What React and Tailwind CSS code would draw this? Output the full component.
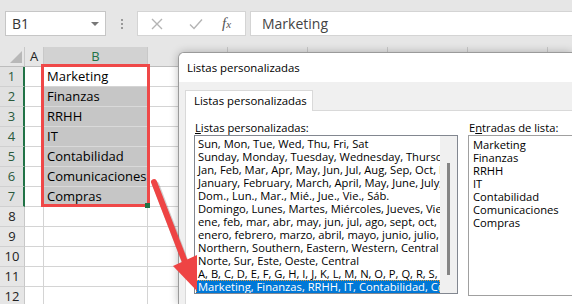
const CELLS = ['Marketing', 'Finanzas', 'RRHH', 'IT', 'Contabilidad', 'Comunicaciones', 'Compras', '', '', '', '', ''];

const LISTS = [
  'Sun, Mon, Tue, Wed, Thu, Fri, Sat',
  'Sunday, Monday, Tuesday, Wednesday, Thursday, Friday, Saturday',
  'Jan, Feb, Mar, Apr, May, Jun, Jul, Aug, Sep, Oct, Nov, Dec',
  'January, February, March, April, May, June, July, August',
  'Dom., Lun., Mar., Mié., Jue., Vie., Sáb.',
  'Domingo, Lunes, Martes, Miércoles, Jueves, Viernes, Sábado',
  'ene, feb, mar, abr, may, jun, jul, ago, sept, oct, nov, dic',
  'enero, febrero, marzo, abril, mayo, junio, julio, agosto',
  'Northern, Southern, Eastern, Western, Central',
  'Norte, Sur, Este, Oeste, Central',
  'A, B, C, D, E, F, G, H, I, J, K, L, M, N, O, P, Q, R, S, T',
];

const ENTRIES = ['Marketing', 'Finanzas', 'RRHH', 'IT', 'Contabilidad', 'Comunicaciones', 'Compras'];

function FormulaBar() {
  return (
    <div className="flex h-[47px] items-start bg-[#e6e6e6] pt-[11px] font-['Open_Sans',sans-serif]">
      <div className="ml-[5px] flex h-[25px] w-[101px] items-center justify-between border border-[#c6c6c6] bg-white pl-[6px] pr-[6px] text-[14px] text-[#333]">
        <span>B1</span>
        <span className="h-0 w-0 border-x-[4px] border-t-[4px] border-x-transparent border-t-[#777]" />
      </div>
      <div className="ml-[15px] mr-[14px] flex h-[25px] flex-col items-center justify-center gap-[2px]">
        <span className="h-[2px] w-[2px] bg-[#999]" />
        <span className="h-[2px] w-[2px] bg-[#999]" />
        <span className="h-[2px] w-[2px] bg-[#999]" />
      </div>
      <div className="flex h-[25px] w-[109px] items-center border border-[#d4d4d4] bg-white">
        <svg width="12" height="12" viewBox="0 0 12 12" className="ml-[13px]">
          <path d="M1 1 L11 11 M11 1 L1 11" stroke="#b4b4b4" strokeWidth="1.4" fill="none" />
        </svg>
        <svg width="14" height="12" viewBox="0 0 14 12" className="ml-[26px]">
          <path d="M1 6.5 L5 10.5 L13 1.5" stroke="#b4b4b4" strokeWidth="1.4" fill="none" />
        </svg>
        <span className="ml-[19px] font-['Liberation_Serif',serif] text-[15px] italic text-[#555]">
          f<span className="text-[11px]">x</span>
        </span>
      </div>
      <div className="ml-[4px] flex h-[25px] flex-1 items-center border border-r-0 border-[#d4d4d4] bg-white pl-[11px] text-[14px] text-[#444]">
        Marketing
      </div>
    </div>
  );
}

function HeaderRow() {
  return (
    <div className="flex h-[20px] border-b border-[#bdbdbd] bg-[#e6e6e6] font-['Open_Sans',sans-serif] text-[13px]">
      <div className="relative w-[25px] border-r border-[#c8c8c8]">
        <span className="absolute bottom-[3px] right-[2px] h-0 w-0 border-b-[12px] border-l-[12px] border-b-[#b8b8b8] border-l-transparent" />
      </div>
      <div className="flex w-[19px] items-center justify-center border-r border-[#c8c8c8] text-[#222]">A</div>
      <div className="flex w-[104px] items-center justify-center border-r border-[#c8c8c8] bg-[#d2d2d2] text-[#217346]">B</div>
      {[0, 1, 2, 3, 4].map((c) => (
        <div key={c} className="w-[80px] shrink-0 border-r border-[#c8c8c8]" />
      ))}
    </div>
  );
}

function GridRow({ index, text }) {
  const selected = index < 7;
  return (
    <div className="flex h-[20px] font-['Open_Sans',sans-serif]">
      <div
        className={`flex w-[25px] shrink-0 items-center justify-center border-b border-[#d0d0d0] text-[13px] ${
          selected ? 'border-r-2 border-r-[#217346] bg-[#e1e1e1] text-[#2a5a3c]' : 'border-r border-r-[#c8c8c8] bg-[#e6e6e6] text-[#222]'
        }`}
      >
        {index + 1}
      </div>
      <div className="w-[19px] shrink-0 border-b border-r border-[#d4d4d4]" />
      <div
        className={`flex w-[104px] shrink-0 items-center overflow-visible whitespace-nowrap border-b border-r pl-[3px] text-[13px] text-black ${
          selected && index > 0 ? 'border-[#d9d9d9] bg-[#c6c6c6]' : 'border-[#d4d4d4] bg-white'
        }`}
      >
        {text}
      </div>
      <div className="w-[80px] shrink-0 border-b border-r border-[#d4d4d4]" />
    </div>
  );
}

function Dialog() {
  return (
    <div className="absolute bottom-0 left-[178px] right-0 top-[52px] flex flex-col overflow-hidden rounded-tl-[6px] border-l border-t border-[#9a9a9a] bg-[#f0f0f0] font-['Open_Sans',sans-serif] text-[11.2px] text-black shadow-[0_0_8px_rgba(0,0,0,0.25)]">
      <div className="flex h-[29px] shrink-0 items-center bg-white pl-[8px] text-[11.4px]">Listas personalizadas</div>
      <div className="flex flex-1 flex-col pl-[6px] pt-[8px]">
        <div className="relative z-10 -mb-px flex h-[21px] w-[128px] items-center border border-b-0 border-[#d9d9d9] bg-white pl-[8px] text-[11.4px]">
          Listas personalizadas
        </div>
        <div className="flex flex-1 gap-[10px] border-l border-t border-[#d9d9d9] bg-white pl-[8px] pt-[9px]">
          <div className="flex w-[264px] shrink-0 flex-col">
            <div className="h-[15px] pl-[1px] leading-[15px]">
              <span className="underline">L</span>istas personalizadas:
            </div>
            <div className="flex h-[159px] border border-[#828790] bg-white">
              <div className="flex min-w-0 flex-1 flex-col overflow-hidden pt-[1px]">
                {LISTS.map((item) => (
                  <div key={item} className="h-[13px] whitespace-nowrap pl-[3px] leading-[13px]">
                    {item}
                  </div>
                ))}
                <div className="ml-[1px] h-[14px] whitespace-nowrap border border-dotted border-[#e39a3a] bg-[#0078d7] pl-[1px] leading-[12px] text-white">
                  Marketing, Finanzas, RRHH, IT, Contabilidad, Comunicaciones, Compras
                </div>
              </div>
              <div className="flex w-[17px] shrink-0 justify-center bg-[#f0f0f0] pt-[27px]">
                <div className="h-[112px] w-[3px] bg-[#858585]" />
              </div>
            </div>
          </div>
          <div className="flex min-w-0 flex-1 flex-col">
            <div className="h-[15px] pl-[1px] leading-[15px]">
              E<span className="underline">n</span>tradas de lista:
            </div>
            <div className="flex h-[161px] flex-col border border-r-0 border-[#a0a0a0] bg-white pl-[4px] pt-[2px]">
              {ENTRIES.map((item) => (
                <div key={item} className="h-[13px] leading-[13px]">
                  {item}
                </div>
              ))}
            </div>
          </div>
        </div>
      </div>
    </div>
  );
}

export default function App() {
  return (
    <div className="relative h-[304px] w-[572px] overflow-hidden bg-white">
      <FormulaBar />
      <HeaderRow />
      {CELLS.map((text, index) => (
        <GridRow key={index} index={index} text={text} />
      ))}

      <div className="absolute left-[41px] top-[64px] h-[143px] w-[109px] border-[3px] border-[#ef4848]" />
      <div className="absolute left-[145px] top-[203px] h-[5px] w-[5px] bg-[#217346]" />

      <Dialog />

      <svg className="pointer-events-none absolute left-0 top-0" width="572" height="304" viewBox="0 0 572 304">
        <line x1="156" y1="185" x2="186" y2="264" stroke="rgba(0,0,0,0.18)" strokeWidth="7" strokeLinecap="round" />
        <line x1="154" y1="182" x2="185" y2="262" stroke="#ee4444" strokeWidth="6" strokeLinecap="round" />
        <polygon points="197,291 173,266 197,255" fill="#ee4444" />
      </svg>
    </div>
  );
}
